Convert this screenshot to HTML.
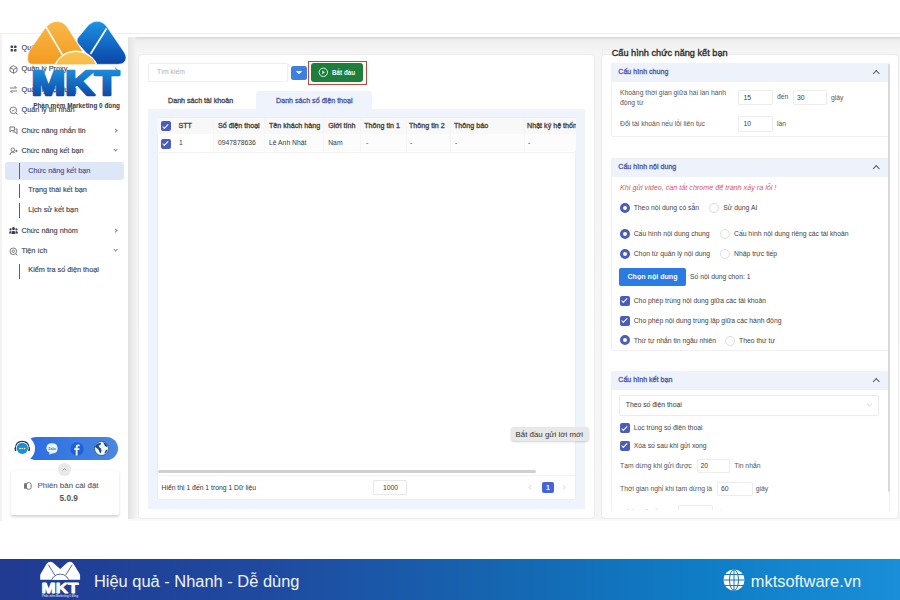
<!DOCTYPE html>
<html><head><meta charset="utf-8">
<style>
*{margin:0;padding:0;box-sizing:border-box}
html,body{width:900px;height:600px;overflow:hidden;background:#fff;font-family:"Liberation Sans",sans-serif;color:#333}
.a{position:absolute}
.t{position:absolute;white-space:nowrap;line-height:10px;height:10px}
.si{font-size:7.3px;color:#44464f;-webkit-text-stroke:.15px #44464f}
.bar{position:absolute;left:19px;width:1.2px;background:#5a5d70}
.chev{position:absolute;width:3.2px;height:3.2px;border:solid #8a8c96;border-width:0 1px 1px 0}
.mt{font-size:6.8px;color:#3a3a3a}
.hd{font-size:7.15px;font-weight:normal;color:#404040;-webkit-text-stroke:.3px #404040}
.cb{position:absolute;width:10px;height:10px;background:#4a5cbc;border-radius:2px}
.cb:after{content:"";position:absolute;left:3.4px;top:1.4px;width:2.4px;height:4.6px;border:solid #fff;border-width:0 1.3px 1.3px 0;transform:rotate(45deg)}
.rd{position:absolute;width:10px;height:10px;border-radius:50%;border:3px solid #4a5cbc;background:#fff}
.ro{position:absolute;width:10px;height:10px;border-radius:50%;border:1px solid #dedede;background:#fff}
.inp{position:absolute;background:#fff;border:1px solid #ededed;border-radius:2px;box-shadow:0 0 1px rgba(0,0,0,.05)}
.sec{position:absolute;left:611px;width:278.5px;background:#fff;border:1px solid #f0f0f0;border-radius:2px}
.sech{position:absolute;left:612px;width:276.5px;height:19px;background:#edf2fb}
.sect{font-size:7.1px;font-weight:normal;color:#5057a6;-webkit-text-stroke:.3px #5057a6}
.up{position:absolute;width:4.5px;height:4.5px;border:solid #5a5d6a;border-width:1.1px 0 0 1.1px;transform:rotate(45deg)}
.lb{font-size:6.8px;color:#555}
.ct{font-size:6.8px;color:#444}
</style></head><body>

<!-- app background -->
<div class="a" style="left:0;top:33px;width:900px;height:1px;background:#efefef"></div>
<div class="a" style="left:128px;top:37px;width:772px;height:484px;background:linear-gradient(180deg,#dadada 0,#e2e2e2 1.5px,#ededed 3px,#f2f2f2 8px,#f5f5f5 16px,#f6f6f6 100%)"></div>
<div class="a" style="left:0;top:34px;width:2px;height:487px;background:#f3f3f3"></div>
<div class="a" style="left:2px;top:34px;width:126px;height:487px;background:#fff"></div>
<div class="a" style="left:128px;top:37px;width:9px;height:484px;background:linear-gradient(90deg,#e1e1e1,#e9e9e9 3px,#efefef 6px,rgba(245,245,245,0))"></div>
<div class="a" style="left:128px;top:519px;width:772px;height:2px;background:#fafafa"></div>

<!-- sidebar icons -->
<svg class="a" style="left:9px;top:44px" width="9" height="9" viewBox="0 0 9 9"><rect x="1.6" y="1.6" width="2.5" height="2.5" rx=".6" fill="#454a5e"/><rect x="5" y="1.6" width="2.5" height="2.5" rx=".6" fill="#454a5e"/><rect x="1.6" y="5" width="2.5" height="2.5" rx=".6" fill="#454a5e"/><rect x="5" y="5" width="2.5" height="2.5" rx=".6" fill="#454a5e"/></svg>
<svg class="a" style="left:9px;top:64.5px" width="9" height="9" viewBox="0 0 9 9" fill="none" stroke="#6a6c78" stroke-width=".9"><path d="M4.5,.8 L8,2.6 L8,6.4 L4.5,8.2 L1,6.4 L1,2.6 Z M1,2.6 L4.5,4.4 L8,2.6 M4.5,4.4 L4.5,8.2"/></svg>
<svg class="a" style="left:9px;top:85px" width="9" height="9" viewBox="0 0 9 9" fill="none" stroke="#6a6c78" stroke-width=".9"><path d="M1,3 L7.5,3 M5.5,1 L7.5,3 M8,6 L1.5,6 M3.5,8 L1.5,6"/></svg>
<svg class="a" style="left:9px;top:105.5px" width="9" height="9" viewBox="0 0 9 9" fill="none" stroke="#6a6c78" stroke-width=".9"><circle cx="4.3" cy="4.3" r="3.3"/><path d="M6.8,6.8 L8.3,8.3 M2.9,4.3 L4,5.3 L5.8,3.4"/></svg>
<svg class="a" style="left:9px;top:126px" width="9" height="9" viewBox="0 0 9 9" fill="none" stroke="#6a6c78" stroke-width=".9"><path d="M1,1 L5.5,1 L5.5,4.5 L2.5,4.5 L1,6 Z M3.5,6 L6,6 L8,7.8 L8,3 L6.5,3"/></svg>
<svg class="a" style="left:9px;top:146.5px" width="9" height="9" viewBox="0 0 9 9" fill="none" stroke="#6a6c78" stroke-width=".9"><circle cx="3.8" cy="2.8" r="1.8"/><path d="M.8,8 Q.8,5.2 3.8,5.2 Q5.5,5.2 6.2,6.2 M6.2,4 L8.6,4 M7.4,2.8 L7.4,5.2"/></svg>
<svg class="a" style="left:9px;top:226px" width="9" height="9" viewBox="0 0 9 9" fill="#3a3e56"><circle cx="4.5" cy="2.6" r="1.5"/><circle cx="1.6" cy="3.4" r="1.1"/><circle cx="7.4" cy="3.4" r="1.1"/><path d="M2.5,8 Q2.5,4.8 4.5,4.8 Q6.5,4.8 6.5,8 Z M0,7.5 Q0,5 1.6,5 Q2.3,5 2.4,5.6 L2,7.5 Z M9,7.5 Q9,5 7.4,5 Q6.7,5 6.6,5.6 L7,7.5 Z"/></svg>
<svg class="a" style="left:9px;top:247px" width="9" height="9" viewBox="0 0 9 9" fill="none" stroke="#6a6c78" stroke-width=".9"><circle cx="4.3" cy="4.3" r="3.3"/><path d="M6.8,6.8 L8.3,8.3"/><circle cx="4.3" cy="4.3" r="1.2"/></svg>

<!-- sidebar items -->
<div class="t si" style="left:21.5px;top:43px">Quản lý tài khoản</div>
<div class="t si" style="left:21.5px;top:64px">Quản lý Proxy</div>
<div class="chev" style="left:113.5px;top:67.5px;transform:rotate(-45deg)"></div>
<div class="t si" style="left:21.5px;top:84.5px">Quản lý nội dung</div>
<div class="t si" style="left:21.5px;top:105px">Quản lý tin nhắn</div>
<div class="t si" style="left:21.5px;top:125.5px">Chức năng nhắn tin</div>
<div class="chev" style="left:113.5px;top:128.5px;transform:rotate(-45deg)"></div>
<div class="t si" style="left:21.5px;top:146px">Chức năng kết bạn</div>
<div class="chev" style="left:113.5px;top:148px;transform:rotate(45deg)"></div>
<div class="a" style="left:5px;top:162px;width:119px;height:17.5px;background:#dee7f7;border-radius:3px"></div>
<div class="bar" style="top:163px;height:15.5px;background:#596196"></div>
<div class="t si" style="left:28.3px;top:165.5px;color:#4a4f9e;-webkit-text-stroke:.15px #4a4f9e">Chức năng kết bạn</div>
<div class="bar" style="top:183.5px;height:14px"></div>
<div class="t si" style="left:28.3px;top:185px">Trạng thái kết bạn</div>
<div class="bar" style="top:203px;height:14.5px"></div>
<div class="t si" style="left:28.3px;top:205px">Lịch sử kết bạn</div>
<div class="t si" style="left:21.5px;top:225.5px">Chức năng nhóm</div>
<div class="chev" style="left:113.5px;top:228.5px;transform:rotate(-45deg)"></div>
<div class="t si" style="left:21.5px;top:246px">Tiện ích</div>
<div class="chev" style="left:113.5px;top:248px;transform:rotate(45deg)"></div>
<div class="bar" style="top:264px;height:14.5px"></div>
<div class="t si" style="left:28.3px;top:265px">Kiểm tra số điện thoại</div>

<!-- SOCIAL -->
<div class="a" style="left:25px;top:436.7px;width:93px;height:23px;border-radius:11.5px;background:linear-gradient(90deg,#2b6be0,#3a7ae2 50%,#4a88e0)"></div>
<div class="a" style="left:10px;top:436px;width:24.5px;height:24.5px;border-radius:50%;background:#fff;box-shadow:0 0 1px rgba(0,0,0,.1)"></div>
<svg class="a" style="left:12px;top:438px" width="21" height="21" viewBox="0 0 21 21">
 <path d="M3.5,11 Q3.5,3.5 10.3,3.5 Q17,3.5 17,11" fill="none" stroke="#1d3a5a" stroke-width="1.3"/>
 <rect x="2.6" y="9" width="2.4" height="4" rx="1" fill="#1d3a5a"/><rect x="15.6" y="9" width="2.4" height="4" rx="1" fill="#1d3a5a"/>
 <circle cx="10.3" cy="10.3" r="6.3" fill="#fff"/>
 <circle cx="10.3" cy="10.3" r="5.6" fill="#1991d0"/>
 <circle cx="8" cy="10.5" r=".8" fill="#fff"/><circle cx="10.3" cy="10.5" r=".8" fill="#fff"/><circle cx="12.6" cy="10.5" r=".8" fill="#fff"/>
</svg>
<svg class="a" style="left:45px;top:442px" width="14" height="14" viewBox="0 0 14 14">
 <path d="M7,1.2 Q12.6,1.2 12.6,6.4 Q12.6,11.4 7,11.4 L4.2,12.8 L4.4,10.6 Q1.4,9.2 1.4,6.4 Q1.4,1.2 7,1.2 Z" fill="#e4f6ff"/>
 <text x="7" y="7.8" font-family="Liberation Sans" font-weight="bold" font-size="3.6" fill="#3a6ab0" text-anchor="middle">Zalo</text>
</svg>
<svg class="a" style="left:70px;top:442px" width="14" height="14" viewBox="0 0 14 14">
 <circle cx="7" cy="7" r="6.7" fill="#2160d6"/>
 <path d="M7.6,13.6 L7.6,8 L9.3,8 L9.6,6.3 L7.6,6.3 L7.6,5.2 Q7.6,4.3 8.5,4.3 L9.7,4.3 L9.7,2.7 Q8.9,2.6 8.1,2.6 Q5.7,2.6 5.7,5 L5.7,6.3 L4.2,6.3 L4.2,8 L5.7,8 L5.7,13.6 Z" fill="#eaf6ff"/>
</svg>
<svg class="a" style="left:94px;top:441px" width="15" height="15" viewBox="0 0 15 15">
 <circle cx="7.5" cy="7.5" r="7" fill="#f4f8ff"/>
 <path d="M3,3 Q5,1.5 7,2 L6.5,4 L4.5,4.5 L5.5,6.5 L7,7.5 L7.5,10 L6.5,12.5 L5.5,11 L4.5,8.5 L2.5,7 L1,6 Q1.5,4 3,3 Z" fill="#1c4a7e"/>
 <path d="M9,1.2 Q12.5,2 13.8,5 L12.5,6 L11,5 L10,3 Z M12,9 L13.5,8.5 Q13,11.5 10.5,13 L11,10.5 Z" fill="#1c4a7e"/>
 <circle cx="7.5" cy="7.5" r="7" fill="none" stroke="#1c4a7e" stroke-width=".8"/>
</svg>
<div class="a" style="left:11px;top:471px;width:107.5px;height:43.5px;background:#fff;border-radius:2px;box-shadow:0 1.5px 2.5px rgba(0,0,0,.17)"></div>
<div class="a" style="left:58px;top:463px;width:12.5px;height:12.5px;border-radius:50%;background:#e9e9e9"></div>
<svg class="a" style="left:61px;top:466px" width="7" height="7" viewBox="0 0 7 7"><path d="M1.8,4.5 L3.5,2.5 L5.2,4.5" fill="none" stroke="#999" stroke-width=".9"/></svg>
<svg class="a" style="left:23px;top:482px" width="9" height="8" viewBox="0 0 9 8"><rect x="1" y="1.2" width="3" height="5.6" rx=".5" fill="#777"/><rect x="3.5" y=".8" width="4.6" height="6.4" rx="1.6" fill="none" stroke="#777" stroke-width="1"/></svg>
<div class="t" style="left:37.5px;top:481px;font-size:7.9px;color:#55565e;-webkit-text-stroke:.1px #55565e">Phiên bản cài đặt</div>
<div class="t" style="left:59.5px;top:493px;font-size:8.3px;font-weight:bold;color:#555">5.0.9</div>


<!-- MAIN -->
<div class="a" style="left:138px;top:54px;width:457px;height:465px;background:#fff;border:1px solid #ececec;border-radius:4px"></div>
<div class="inp" style="left:148px;top:63px;width:140px;height:19px;border-color:#f0f0f0;box-shadow:0 0 1.5px rgba(0,0,0,.07)"></div>
<div class="t" style="left:157px;top:67px;font-size:6.8px;color:#b0b0b0">Tìm kiếm</div>
<div class="a" style="left:291px;top:65.5px;width:15.5px;height:14px;background:#3d80e2;border-radius:2.5px"></div>
<svg class="a" style="left:295px;top:69px" width="8" height="7" viewBox="0 0 8 7"><path d="M.8,2 L7.2,2 L4.8,4.8 L3.2,4.8 Z" fill="#eaf2ff"/></svg>
<div class="a" style="left:308px;top:60.5px;width:59px;height:24px;border:1.2px solid #b84848;background:#fffdf0"></div>
<div class="a" style="left:310.5px;top:63px;width:52.5px;height:18.5px;background:#1f7e3d;border-radius:3px"></div>
<svg class="a" style="left:317.5px;top:67px" width="11" height="11" viewBox="0 0 11 11"><circle cx="5.3" cy="5.3" r="4.2" fill="none" stroke="#d8f5dc" stroke-width="1"/><path d="M4.3,3.4 L7,5.3 L4.3,7.2 Z" fill="#d8f5dc"/></svg>
<div class="t" style="left:332px;top:67.5px;font-size:6.3px;font-weight:bold;color:#eefaf0">Bắt đầu</div>

<div class="a" style="left:256px;top:91px;width:116px;height:18px;background:#eef3fc;border-radius:3px 3px 0 0"></div>
<div class="t hd" style="left:168px;top:95.5px;color:#444;-webkit-text-stroke:.3px #444">Danh sách tài khoản</div>
<div class="t hd" style="left:276px;top:95.5px;color:#4d56a4;-webkit-text-stroke:.3px #4d56a4">Danh sách số điện thoại</div>
<div class="a" style="left:148px;top:109px;width:437px;height:399.5px;background:#eff3fc"></div>
<div class="a" style="left:156.5px;top:117px;width:419.5px;height:383px;background:#fff;border:1px solid #eceef2;border-radius:2px"></div>
<div class="a" style="left:157px;top:118px;width:419px;height:16px;background:#f8f8f8"></div>
<div class="a" style="left:173px;top:135px;width:40px;height:16px;background:#fff"></div>
<div class="a" style="left:213px;top:134px;width:363px;height:17px;background:#fcfcfc"></div>

<div class="a" style="left:174px;top:118px;width:1px;height:16px;background:#fff"></div>
<div class="a" style="left:213px;top:118px;width:1px;height:34px;background:#f5f5f5"></div>
<div class="a" style="left:263.5px;top:118px;width:1px;height:34px;background:#f5f5f5"></div>
<div class="a" style="left:323px;top:118px;width:1px;height:34px;background:#f5f5f5"></div>
<div class="a" style="left:359.5px;top:118px;width:1px;height:34px;background:#f5f5f5"></div>
<div class="a" style="left:405.5px;top:118px;width:1px;height:34px;background:#f5f5f5"></div>
<div class="a" style="left:450px;top:118px;width:1px;height:34px;background:#f5f5f5"></div>
<div class="a" style="left:523.5px;top:118px;width:1px;height:34px;background:#f5f5f5"></div>
<div class="a" style="left:157px;top:151.5px;width:419px;height:1px;background:#f3f3f3"></div>
<div class="cb" style="left:161px;top:121.4px"></div>
<div class="cb" style="left:161px;top:138.6px"></div>
<div class="t hd" style="left:178.5px;top:121px">STT</div>
<div class="t hd" style="left:218px;top:121px">Số điện thoại</div>
<div class="t hd" style="left:269px;top:121px">Tên khách hàng</div>
<div class="t hd" style="left:328.2px;top:121px">Giới tính</div>
<div class="t hd" style="left:364.2px;top:121px">Thông tin 1</div>
<div class="t hd" style="left:409px;top:121px">Thông tin 2</div>
<div class="t hd" style="left:454px;top:121px">Thông báo</div>
<div class="a" style="left:527px;top:118px;width:48.5px;height:16px;overflow:hidden"><div class="t hd" style="left:0;top:3px">Nhật ký hệ thống</div></div>
<div class="t mt" style="left:179px;top:138px">1</div>
<div class="t mt" style="left:218px;top:138px">0947878636</div>
<div class="t mt" style="left:269px;top:138px">Lê Anh Nhật</div>
<div class="t mt" style="left:328.2px;top:138px">Nam</div>
<div class="t mt" style="left:366px;top:138px">-</div>
<div class="t mt" style="left:410px;top:138px">-</div>
<div class="t mt" style="left:455px;top:138px">-</div>
<div class="t mt" style="left:528px;top:138px">-</div>

<div class="a" style="left:157.5px;top:469.5px;width:378px;height:3.5px;background:#d0d0d0;border-radius:2px"></div>
<div class="a" style="left:157px;top:475px;width:419px;height:1px;background:#f2f2f2"></div>
<div class="t mt" style="left:161.5px;top:482.8px;color:#333">Hiển thị 1 đến 1 trong 1 Dữ liệu</div>
<div class="inp" style="left:373px;top:480px;width:34px;height:15px;border-color:#e8e8e8"></div>
<div class="t mt" style="left:383px;top:482.5px">1000</div>
<svg class="a" style="left:527px;top:484px" width="6" height="7" viewBox="0 0 6 7"><path d="M4,1.5 L2,3.5 L4,5.5" fill="none" stroke="#c4c4c4" stroke-width=".8"/></svg>
<div class="a" style="left:542px;top:481.5px;width:12px;height:11.8px;background:#4564d6;border-radius:2px"></div>
<div class="t" style="left:546px;top:482.5px;font-size:6.8px;color:#fff;font-weight:bold">1</div>
<svg class="a" style="left:561px;top:484px" width="6" height="7" viewBox="0 0 6 7"><path d="M2,1.5 L4,3.5 L2,5.5" fill="none" stroke="#c4c4c4" stroke-width=".8"/></svg>
<div class="a" style="left:510.7px;top:427.3px;width:78.6px;height:14.2px;background:#e8e8e8;border-radius:3px;box-shadow:0 1px 2px rgba(0,0,0,.18)"></div>
<div class="t" style="left:515.5px;top:429.5px;font-size:7.9px;color:#333">Bắt đầu gửi lời mới</div>


<!-- RIGHT -->
<div class="a" style="left:601px;top:54px;width:298px;height:465px;background:#fff;border:1px solid #ebebeb;border-radius:4px"></div>
<div class="a" style="left:601.5px;top:49px;width:1px;height:6px;background:#ececec"></div>
<div class="a" style="left:601.5px;top:49px;width:8px;height:1px;background:#ececec"></div>
<div class="t" style="left:611.7px;top:47.5px;font-size:9.2px;color:#262626;-webkit-text-stroke:.3px #262626">Cấu hình chức năng kết bạn</div>

<div class="sec" style="top:62.5px;height:74.5px"></div>
<div class="sech" style="top:63px"></div>
<div class="t sect" style="left:618.3px;top:67.4px">Cấu hình chung</div>
<div class="up" style="left:874px;top:71px"></div>
<div class="t lb" style="left:620px;top:88px">Khoảng thời gian giữa hai lần hành</div>
<div class="t lb" style="left:620px;top:97.7px">động từ</div>
<div class="inp" style="left:738px;top:90px;width:35px;height:15px"></div>
<div class="t mt" style="left:743.5px;top:92.5px">15</div>
<div class="t lb" style="left:777px;top:92px">đến</div>
<div class="inp" style="left:793px;top:90px;width:34px;height:15px"></div>
<div class="t mt" style="left:797px;top:92.5px">30</div>
<div class="t lb" style="left:831px;top:92.5px">giây</div>
<div class="t lb" style="left:620px;top:118.6px">Đổi tài khoản nếu lỗi liên tục</div>
<div class="inp" style="left:738px;top:116px;width:35px;height:16px"></div>
<div class="t mt" style="left:743.5px;top:119px">10</div>
<div class="t lb" style="left:777px;top:119px">lần</div>

<div class="sec" style="top:158px;height:192.5px"></div>
<div class="sech" style="top:158.5px;height:18.5px"></div>
<div class="t sect" style="left:618.3px;top:162px">Cấu hình nội dung</div>
<div class="up" style="left:874px;top:166px"></div>
<div class="t" style="left:620px;top:182.8px;font-size:7.2px;font-style:italic;color:#d4575e">Khi gửi video, cần tắt chrome để tránh xảy ra lỗi !</div>
<div class="rd" style="left:619.5px;top:203.3px"></div>
<div class="t ct" style="left:633.7px;top:203.3px">Theo nội dung có sẵn</div>
<div class="ro" style="left:709px;top:203.3px"></div>
<div class="t ct" style="left:723.3px;top:203.3px">Sử dụng AI</div>
<div class="rd" style="left:619.5px;top:229.3px"></div>
<div class="t ct" style="left:633.7px;top:229.3px">Cấu hình nội dung chung</div>
<div class="ro" style="left:720px;top:229.3px"></div>
<div class="t ct" style="left:734px;top:229.3px">Cấu hình nội dung riêng các tài khoản</div>
<div class="rd" style="left:619.5px;top:249.3px"></div>
<div class="t ct" style="left:633.7px;top:249.3px">Chọn từ quản lý nội dung</div>
<div class="ro" style="left:720px;top:249.3px"></div>
<div class="t ct" style="left:734px;top:249.3px">Nhập trực tiếp</div>
<div class="a" style="left:619.3px;top:268.3px;width:66.7px;height:17.7px;background:#2c7be2;border-radius:2px"></div>
<div class="t" style="left:627.5px;top:272px;font-size:7.1px;font-weight:bold;color:#fff">Chọn nội dung</div>
<div class="t ct" style="left:690px;top:272px">Số nội dung chọn: 1</div>
<div class="cb" style="left:620px;top:295.7px"></div>
<div class="t ct" style="left:633.7px;top:295.7px">Cho phép trùng nội dung giữa các tài khoản</div>
<div class="cb" style="left:620px;top:315.7px"></div>
<div class="t ct" style="left:633.7px;top:315.7px">Cho phép nội dung trùng lặp giữa các hành động</div>
<div class="rd" style="left:619.5px;top:335px"></div>
<div class="t ct" style="left:633.7px;top:335.5px">Thứ tự nhắn tin ngẫu nhiên</div>
<div class="ro" style="left:725px;top:335.5px"></div>
<div class="t ct" style="left:739px;top:335.5px">Theo thứ tự</div>

<div class="sec" style="top:370.5px;height:140px;border-bottom:none;border-radius:2px 2px 0 0"></div>
<div class="sech" style="top:371px;height:18.5px"></div>
<div class="t sect" style="left:618.3px;top:375px">Cấu hình kết bạn</div>
<div class="up" style="left:874px;top:379px"></div>
<div class="inp" style="left:619.3px;top:395px;width:260px;height:21px;border-color:#ebebeb"></div>
<div class="t mt" style="left:625.8px;top:400.3px;color:#333">Theo số điện thoại</div>
<svg class="a" style="left:866px;top:402px" width="7" height="6" viewBox="0 0 7 6"><path d="M1.2,1.8 L3.5,4 L5.8,1.8" fill="none" stroke="#c4c4c4" stroke-width=".8"/></svg>
<div class="cb" style="left:620px;top:423.3px"></div>
<div class="t ct" style="left:633.7px;top:423.3px">Lọc trùng số điện thoại</div>
<div class="cb" style="left:620px;top:440.7px"></div>
<div class="t ct" style="left:633.7px;top:440.7px">Xóa số sau khi gửi xong</div>
<div class="t lb" style="left:620px;top:461px">Tạm dừng khi gửi được</div>
<div class="inp" style="left:696.7px;top:459.3px;width:33.3px;height:14px"></div>
<div class="t mt" style="left:700.5px;top:461.3px">20</div>
<div class="t lb" style="left:734.3px;top:461px">Tin nhắn</div>
<div class="t lb" style="left:620px;top:484px">Thời gian nghỉ khi tạm dừng là</div>
<div class="inp" style="left:716.7px;top:482px;width:36.6px;height:14px"></div>
<div class="t mt" style="left:721px;top:484px">60</div>
<div class="t lb" style="left:755.7px;top:484px">giây</div>
<div class="a" style="left:611px;top:503px;width:276px;height:6.5px;overflow:hidden">
 <div class="inp" style="left:67px;top:1.5px;width:35px;height:14px"></div>
 <div class="t lb" style="left:9px;top:4.5px;color:#999">Số lần gửi lỗi</div>
 <div class="t lb" style="left:108px;top:4.5px;color:#999">lần</div>
</div>
<div class="a" style="left:887.6px;top:64px;width:2.2px;height:428px;background:#d9d9d9;border-radius:1px"></div>


<!-- FOOTER -->
<div class="a" style="left:0;top:559px;width:900px;height:41px;background:linear-gradient(90deg,#213a92 0%,#1f4aa0 30%,#1665b0 55%,#0f7dc6 78%,#1a8ed8 100%)"></div>
<svg class="a" style="left:36px;top:559px" width="50" height="41" viewBox="36 559 50 41">
 <defs><clipPath id="fc"><rect x="36" y="559" width="50" height="20.7"/></clipPath></defs>
 <path d="M40.2,579.7 L40.2,575.5 Q40.2,574.5 41,573.3 L46.5,564 Q48,561.8 50.2,561.8 Q52.6,561.8 54.2,563.8 L60.2,569 L66,563.8 Q67.8,561.8 70,561.8 Q72.2,561.8 73.6,564 L79.3,573.3 Q80.1,574.5 80.1,575.5 L80.1,579.7 Z" fill="#fff"/>
 <path d="M48.3,564.7 L54.9,575.2" stroke="#2a3f8f" stroke-width="0.8"/>
 <path d="M72.2,564.8 L65.6,575.2" stroke="#2a3f8f" stroke-width="0.8"/>
 <g clip-path="url(#fc)"><circle cx="60.2" cy="583.4" r="9.3" fill="#fff" stroke="#2a3f8f" stroke-width="0.8"/></g>
 <text x="41.6" y="592.6" font-family="Liberation Sans" font-weight="bold" font-size="14" fill="#fff" stroke="#fff" stroke-width=".9" stroke-linejoin="round" textLength="36.8" lengthAdjust="spacingAndGlyphs">MKT</text>
 <text x="42" y="597.2" font-family="Liberation Sans" font-weight="bold" font-size="2.6" fill="#c9d3ee" textLength="36" lengthAdjust="spacingAndGlyphs">Phần mềm Marketing 0 đồng</text>
</svg>
<div class="t" style="left:93.9px;top:574.8px;font-size:16.45px;line-height:12px;color:#eef4ff">Hiệu quả - Nhanh - Dễ dùng</div>
<svg class="a" style="left:723px;top:569px" width="22" height="22" viewBox="0 0 22 22">
 <circle cx="11" cy="11" r="10.5" fill="#fff"/>
 <g stroke="#1578c0" stroke-width="1" fill="none">
  <ellipse cx="11" cy="11" rx="4.5" ry="10.3"/>
  <line x1="11" y1="0.5" x2="11" y2="21.5"/>
  <line x1="0.5" y1="11" x2="21.5" y2="11"/>
  <line x1="2" y1="5.5" x2="20" y2="5.5"/>
  <line x1="2" y1="16.5" x2="20" y2="16.5"/>
 </g>
</svg>
<div class="t" style="left:750.8px;top:575px;font-size:16.4px;line-height:12px;color:#eef6ff">mktsoftware.vn</div>


<!-- LOGO -->
<svg class="a" style="left:0;top:0" width="140" height="115" viewBox="0 0 140 115">
 <defs>
  <linearGradient id="og" x1="0" y1="0" x2="0" y2="1"><stop offset="0" stop-color="#f8b948"/><stop offset="1" stop-color="#f39a20"/></linearGradient>
  <linearGradient id="bg" x1="0" y1="0" x2="0" y2="1"><stop offset="0" stop-color="#1b93e4"/><stop offset="1" stop-color="#0b44a6"/></linearGradient>
  <linearGradient id="tg" x1="0" y1="0" x2="0" y2="1"><stop offset="0" stop-color="#1f9de8"/><stop offset="1" stop-color="#0a3a9a"/></linearGradient>
  <linearGradient id="sg" x1="0" y1="0" x2="0" y2="1"><stop offset="0" stop-color="#f9c453"/><stop offset="1" stop-color="#f3a52a"/></linearGradient>
  <clipPath id="sc"><rect x="0" y="0" width="140" height="64.3"/></clipPath>
 </defs>
 <path d="M33,64.3 Q27.6,64.3 27.6,59 Q27.6,53.5 29.6,50.5 L44.6,29 Q50,21.5 57,21.5 Q63.5,21.5 67.5,27.5 L86,57 L86,64.3 Z" fill="url(#og)" stroke="#fff3dc" stroke-width=".6"/>
 <path d="M79,36.5 L89,24.5 Q94,20.5 99.5,21.5 Q104,22.5 107,27 L124,52 Q128,58 124,62.5 Q122,64.3 118,64.3 L96,64.3 L78.5,44 Q75.5,40 79,36.5 Z" fill="url(#bg)" stroke="#dff2ff" stroke-width=".6"/>
 <path d="M46,27 L62.5,55" stroke="#fff" stroke-width="1.5"/>
 <path d="M106.5,28.5 L90.5,54" stroke="#fff" stroke-width="1.6"/>
 <g clip-path="url(#sc)"><circle cx="76" cy="74" r="22.8" fill="url(#sg)" stroke="#fff" stroke-width="1.4"/></g>
 <text x="31.4" y="95.3" font-family="Liberation Sans" font-weight="bold" font-size="35.2" fill="url(#tg)" stroke="url(#tg)" stroke-width="2.6" stroke-linejoin="round" textLength="88" lengthAdjust="spacingAndGlyphs">MKT</text>
 <text x="33.2" y="107.6" font-family="Liberation Sans" font-weight="bold" font-size="6.6" fill="#303848" textLength="86.8" lengthAdjust="spacingAndGlyphs">Phần mềm Marketing 0 đồng</text>
</svg>


</body></html>
